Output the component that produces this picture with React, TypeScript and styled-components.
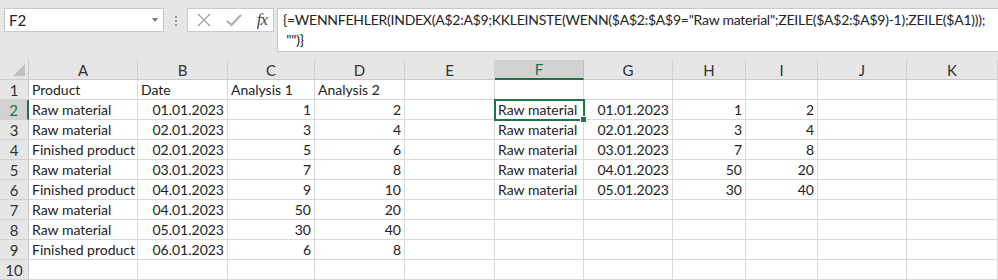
import styled, { createGlobalStyle } from "styled-components";

const GlobalStyle = createGlobalStyle`
  body {
    margin: 0;
    background: #e6e6e6;
    overflow: hidden;
  }
`;

const FONT = `"Lato", "Open Sans", sans-serif`;
const GRID = "#d9d9d9";
const GREEN = "#217346";

const Page = styled.div`
  width: 998px;
  height: 280px;
  font-family: ${FONT};
  color: #222;
  background: #e6e6e6;
`;

const FormulaBar = styled.div`
  display: flex;
  align-items: flex-start;
  height: 60px;
  padding: 8px 0 0 4px;
  box-sizing: border-box;
`;

const NameBox = styled.div`
  flex-shrink: 0;
  display: flex;
  align-items: center;
  justify-content: space-between;
  width: 160px;
  height: 24px;
  box-sizing: border-box;
  background: #fff;
  border: 1px solid #c8c8c8;
  padding: 0 5px 0 4px;
  font-size: 15px;
`;

const Caret = styled.span`
  width: 0;
  height: 0;
  border-left: 3px solid transparent;
  border-right: 3px solid transparent;
  border-top: 4px solid #777;
`;

const Dots = styled.div`
  flex-shrink: 0;
  display: flex;
  flex-direction: column;
  gap: 2px;
  margin: 8px 10px 0 11px;
  span {
    width: 2px;
    height: 2px;
    background: #999;
  }
`;

const ButtonBox = styled.div`
  flex-shrink: 0;
  display: flex;
  align-items: center;
  justify-content: space-between;
  width: 87px;
  height: 24px;
  box-sizing: border-box;
  background: #fff;
  border: 1px solid #c8c8c8;
  padding: 0 6px 0 9px;
  margin-right: 3px;
`;

const Fx = styled.span`
  font-family: "Liberation Serif", serif;
  font-style: italic;
  font-size: 17px;
  color: #444;
  letter-spacing: -1px;
`;

const FormulaBox = styled.div`
  flex: 1;
  min-width: 0;
  overflow: hidden;
  height: 44px;
  box-sizing: border-box;
  background: #fff;
  border: 1px solid #c8c8c8;
  border-right: none;
  padding: 1px 0 0 5px;
  font-size: 14px;
  letter-spacing: -0.25px;
  line-height: 20px;
  white-space: pre;
`;

const Sheet = styled.div`
  display: grid;
  grid-template-columns: 29px 109px 90px 87px 90px 90px 89px 89px 73px 72px 89px 91px;
  grid-auto-rows: 20px;
  background: #fff;
  font-size: 14px;
`;

const Corner = styled.div`
  position: relative;
  background: #e6e6e6;
  border-right: 1px solid #c8c8c8;
  border-bottom: 1px solid #c8c8c8;
  &::after {
    content: "";
    position: absolute;
    right: 3px;
    bottom: 3px;
    border-left: 12px solid transparent;
    border-bottom: 12px solid #c0c0c0;
  }
`;

const ColHead = styled.div<{ $active?: boolean }>`
  display: flex;
  align-items: center;
  justify-content: center;
  font-size: 15px;
  background: ${(p) => (p.$active ? "#d2d2d2" : "#e6e6e6")};
  color: ${(p) => (p.$active ? GREEN : "#333")};
  border-right: 1px solid ${(p) => (p.$active ? "#bdbdbd" : "#d0d0d0")};
  border-bottom: ${(p) => (p.$active ? `2px solid ${GREEN}` : "1px solid #c8c8c8")};
  box-sizing: border-box;
`;

const RowHead = styled.div<{ $active?: boolean }>`
  display: flex;
  align-items: center;
  justify-content: center;
  font-size: 15px;
  background: ${(p) => (p.$active ? "#d2d2d2" : "#e6e6e6")};
  color: ${(p) => (p.$active ? GREEN : "#333")};
  border-right: ${(p) => (p.$active ? `2px solid ${GREEN}` : "1px solid #c8c8c8")};
  border-bottom: 1px solid #d0d0d0;
  box-sizing: border-box;
`;

const Cell = styled.div<{ $right?: boolean; $selected?: boolean }>`
  position: relative;
  display: flex;
  align-items: center;
  justify-content: ${(p) => (p.$right ? "flex-end" : "flex-start")};
  padding: 0 3px;
  border-right: 1px solid ${GRID};
  border-bottom: 1px solid ${GRID};
  box-sizing: border-box;
  white-space: nowrap;
  ${(p) =>
    p.$selected &&
    `
    outline: 2px solid ${GREEN};
    outline-offset: -1px;
    z-index: 1;
    &::after {
      content: "";
      position: absolute;
      right: -4px;
      bottom: -4px;
      width: 5px;
      height: 5px;
      background: ${GREEN};
      border: 1px solid #fff;
    }
  `}
`;

const columns = ["A", "B", "C", "D", "E", "F", "G", "H", "I", "J", "K"];

type Value = { text: string; right?: boolean };

const source: string[][] = [
  ["Product", "Date", "Analysis 1", "Analysis 2"],
  ["Raw material", "01.01.2023", "1", "2"],
  ["Raw material", "02.01.2023", "3", "4"],
  ["Finished product", "02.01.2023", "5", "6"],
  ["Raw material", "03.01.2023", "7", "8"],
  ["Finished product", "04.01.2023", "9", "10"],
  ["Raw material", "04.01.2023", "50", "20"],
  ["Raw material", "05.01.2023", "30", "40"],
  ["Finished product", "06.01.2023", "6", "8"],
  ["", "", "", ""],
];

const result: string[][] = [
  ["", "", "", ""],
  ["Raw material", "01.01.2023", "1", "2"],
  ["Raw material", "02.01.2023", "3", "4"],
  ["Raw material", "03.01.2023", "7", "8"],
  ["Raw material", "04.01.2023", "50", "20"],
  ["Raw material", "05.01.2023", "30", "40"],
];

function rowValues(r: number): Value[] {
  const left = source[r];
  const right = result[r] || ["", "", "", ""];
  const numeric = (i: number) => r > 0 && i > 0;
  return [
    ...left.map((t, i) => ({ text: t, right: numeric(i) })),
    { text: "" },
    ...right.map((t, i) => ({ text: t, right: numeric(i) })),
    { text: "" },
    { text: "" },
  ];
}

const formula1 =
  '{=WENNFEHLER(INDEX(A$2:A$9;KKLEINSTE(WENN($A$2:$A$9="Raw material";ZEILE($A$2:$A$9)-1);ZEILE($A1)));';
const formula2 = ' "")}';

export default function App() {
  return (
    <Page>
      <GlobalStyle />
      <FormulaBar>
        <NameBox>
          F2
          <Caret />
        </NameBox>
        <Dots>
          <span />
          <span />
          <span />
        </Dots>
        <ButtonBox>
          <svg width="14" height="14" viewBox="0 0 14 14">
            <path d="M1 1 L13 13 M13 1 L1 13" stroke="#a6a6a6" strokeWidth="1.4" fill="none" />
          </svg>
          <svg width="16" height="14" viewBox="0 0 16 14">
            <path d="M1 8 L5.5 12 L15 2" stroke="#b0b0b0" strokeWidth="2.2" fill="none" />
          </svg>
          <Fx>fx</Fx>
        </ButtonBox>
        <FormulaBox>
          {formula1}
          {"\n"}
          {formula2}
        </FormulaBox>
      </FormulaBar>
      <Sheet>
        <Corner />
        {columns.map((c) => (
          <ColHead key={c} $active={c === "F"}>
            {c}
          </ColHead>
        ))}
        {source.map((_, r) => (
          <>
            <RowHead key={`h${r}`} $active={r === 1}>
              {r + 1}
            </RowHead>
            {rowValues(r).map((v, i) => (
              <Cell key={`${r}-${i}`} $right={v.right} $selected={r === 1 && i === 5}>
                {v.text}
              </Cell>
            ))}
          </>
        ))}
      </Sheet>
    </Page>
  );
}
